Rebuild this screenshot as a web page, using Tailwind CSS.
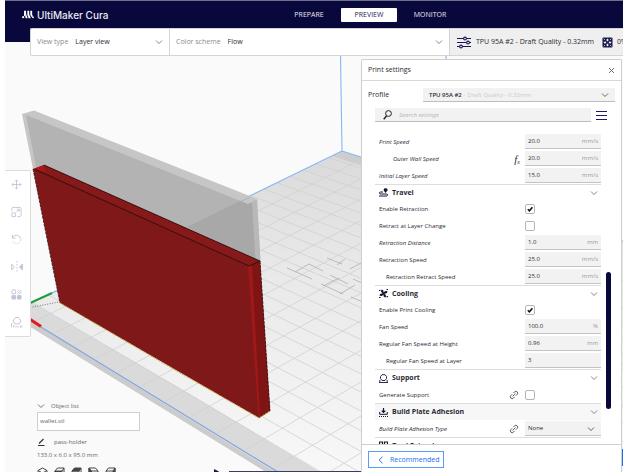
<!DOCTYPE html>
<html lang="en">
  <head>
    <meta charset="UTF-8" />
    <meta name="viewport" content="width=device-width, initial-scale=1.0" />
    <title>UltiMaker Cura</title>
    <script src="https://cdn.jsdelivr.net/npm/@tailwindcss/browser@4"></script>
  </head>
  <body class="bg-white px-[5px] font-['Open_Sans','Noto_Sans',sans-serif] text-[7px] leading-[10px] text-[#2b2b35]">
    <!-- Shared icons -->
    <svg class="hidden" xmlns="http://www.w3.org/2000/svg">
      <symbol id="chevron" viewBox="0 0 8 8"><path d="M1 2.500l3 3 3-3" fill="none" stroke="currentColor" stroke-width="0.9" /></symbol>
      <symbol id="check" viewBox="0 0 10 10"><path d="M2.800 5.200l1.600 1.600 3-3.600" fill="none" stroke="#101024" stroke-width="1.600" /></symbol>
      <symbol id="link" viewBox="0 0 10 10">
        <g fill="none" stroke="#555" stroke-width="0.9" transform="rotate(-45 5 5)">
          <path d="M4.200 3.200H2.400a1.800 1.800 0 000 3.600h1.800" />
          <path d="M5.800 3.200h1.800a1.800 1.800 0 010 3.600H5.800" />
          <path d="M3 5h4" />
        </g>
      </symbol>
    </svg>

    <div class="relative h-screen overflow-hidden bg-[#fafafa]">
      <!-- 3D view -->
      <svg class="absolute inset-0 h-full w-full" viewBox="5 0 618 472" preserveAspectRatio="xMinYMin slice" xmlns="http://www.w3.org/2000/svg">
        <defs>
          <linearGradient id="bed" x1="0" y1="0" x2="0" y2="1">
            <stop offset="0" stop-color="#dadada" />
            <stop offset="0.35" stop-color="#e8e8e8" />
            <stop offset="1" stop-color="#f8f8f8" />
          </linearGradient>
          <clipPath id="bed-clip"><path d="M342 151L623 241V472H266L16 318V310z" /></clipPath>
        </defs>
        <g clip-path="url(#bed-clip)">
          <rect x="5" y="151" width="618" height="321" fill="url(#bed)" />
          <path d="M16 293l164 95 140 84h-60L16 322z" fill="#dadada" />
          <path d="M342 151l-10 5 40 13v-10z" fill="#cdcdcd" />
          <path id="grid" d="" fill="none" stroke="#d0d0d0" stroke-width="0.8" />
          <path d="M16 312L278 474 264 474 16 320z" fill="#cccccc" />
          <path d="M287 268l25 11M295 272l14-8 14 7M323 286l16-8M321 284l22 10M340 294l15-9M351 297l12 5M327 258l15 6M337 265l8-6M330 275l18 9M350 269l11-6M353 279l9 4" fill="none" stroke="#b4b4b4" stroke-width="0.9" />
        </g>
        <path d="M340.500 55L342 151L188 226M342 151l281 90M446 55v6" fill="none" stroke="#86b5f6" stroke-width="1.100" />
        <path d="M41 327L278 472M52 293l6-3" fill="none" stroke="#7ba3e4" stroke-width="1.100" />
        <path d="M28 304l24-11" stroke="#1f9d3d" stroke-width="2" />
        <path d="M28 318l13 8.500" stroke="#e01b24" stroke-width="3.200" />
        <path d="M30 307.500l29-5.500" stroke="#555" stroke-width="0.8" stroke-dasharray="1 1.500" />

        <!-- layers not printed yet -->
        <path d="M22 114l12-3.500L257 199l3.500 63L44 166l-11 3z" fill="#c6c6c6" />
        <path d="M26 115L248 204l7-3 4 61L44 166l-8 1z" fill="#b3b3b3" />
        <path d="M187 227l53-26 8 3 7-3 3.500 60z" fill="#a8a8a8" />
        <path d="M252 202l5-3 3.500 63-5-2z" fill="#b8b8b8" />
        <path d="M236 204L250 197" stroke="#9aa9bd" stroke-width="0.7" />

        <!-- printed layers -->
        <path d="M33 169l11-4 216 96 10 150-11 7L60 303z" fill="#7f1919" />
        <path d="M33 169l11-4 2 7z" fill="#a81616" />
        <path d="M44 165l216 96-11 5L45 172.500z" fill="#861a1a" />
        <path d="M249 266l11-5 10 150-11 7z" fill="#7f1414" />
        <path d="M248 266l4-1 8 152-1.500.5z" fill="#a01919" />
        <path d="M44 165l216 96M35 169.500l214 96.500 11-5" fill="none" stroke="#2c0a0a" stroke-width="0.8" />
        <path d="M33 169l27 134M260 261l10 150" fill="none" stroke="#3a1212" stroke-width="0.8" stroke-dasharray="3 1" />
        <path d="M60 303l120 70 79 45 11-7" fill="none" stroke="#c9b44a" stroke-width="1" stroke-dasharray="2 1" />

        <!-- simulation slider -->
        <path d="M214 469l5 2.500-5 3z" fill="#1a1a52" />
        <path d="M229 471.500h140" stroke="#3a3a6c" />
        <path d="M622 449h1v17h-1z" fill="#196ef0" />
      </svg>

      <!-- Header -->
      <header class="relative flex h-[42px] items-start border-t border-[#70708e] bg-[#08083c] text-[#e8e8f0]">
        <div class="flex h-[27px] w-[276px] items-center gap-[3px] pl-[17px]">
          <svg class="h-[9px] w-[12px] shrink-0" viewBox="0 0 13 9" fill="#fff" xmlns="http://www.w3.org/2000/svg">
            <path d="M2.200 0.500h2.200v4.500L2.200 6.500zM5.800 0.500h2v4l1.800 4H7.200L5.800 5z M9 0.500h2v4l1 2.500h-2L9 5z" />
            <path d="M4.400 4l1.700 4.500H4.100L3.300 6z" />
            <circle cx="1.300" cy="7.400" r="1.200" />
            <circle cx="11.900" cy="7.600" r="1" />
          </svg>
          <h1 class="font-[Inter,sans-serif] text-[10px] font-medium whitespace-nowrap">UltiMaker Cura</h1>
        </div>
        <nav class="flex h-[27px] items-center gap-1">
          <button class="h-[14px] w-[56px] rounded-[1px]">PREPARE</button>
          <button class="h-[14px] w-[56px] rounded-[1px] bg-white text-[#1a1a52]">PREVIEW</button>
          <button class="h-[14px] w-[58px] rounded-[1px]">MONITOR</button>
        </nav>
      </header>

      <!-- View options -->
      <div class="relative -mt-[14px] ml-[25px] flex h-7 rounded-l-[2px] border border-r-0 border-[#d4d4d4] bg-white">
        <div class="relative flex w-[139px] items-center gap-[7px] border-r border-[#d4d4d4] pr-2 pl-[6px]">
          <label for="view-type" class="whitespace-nowrap text-[#8c8c8c]">View type</label>
          <select id="view-type" class="flex-1 appearance-none">
            <option>Layer view</option>
          </select>
          <svg class="pointer-events-none absolute right-[6px] h-2 w-2 text-[#777]"><use href="#chevron" /></svg>
        </div>
        <div class="relative flex flex-1 items-center gap-[7px] border-r border-[#d4d4d4] pr-2 pl-[6px]">
          <label for="color-scheme" class="whitespace-nowrap text-[#8c8c8c]">Color scheme</label>
          <select id="color-scheme" class="flex-1 appearance-none">
            <option>Flow</option>
          </select>
          <svg class="pointer-events-none absolute right-[6px] h-2 w-2 text-[#777]"><use href="#chevron" /></svg>
        </div>
        <button class="flex w-[173px] items-center overflow-hidden bg-[#efefef] pl-[7px] whitespace-nowrap">
          <svg class="mr-[5px] h-[13px] w-[14px] shrink-0" viewBox="0 0 14 13" fill="none" stroke="#1a1a52" stroke-width="1.100" xmlns="http://www.w3.org/2000/svg">
            <path d="M0 2.500h6.500M9.500 2.500H14M0 6.500h9.500M12.500 6.500H14M0 10.500h2.500M5.500 10.500H14" />
            <circle cx="8" cy="2.500" r="1.400" />
            <circle cx="11" cy="6.500" r="1.400" />
            <circle cx="4" cy="10.500" r="1.400" />
          </svg>
          <span>TPU 95A #2 - Draft Quality - 0.32mm</span>
          <svg class="mr-1 ml-2 h-[11px] w-[11px] shrink-0" viewBox="0 0 11 11" xmlns="http://www.w3.org/2000/svg">
            <rect x="0.500" y="0.500" width="10" height="10" rx="1" fill="#1a1a52" />
            <path d="M5.500 1.500l1.300 1.500-1.300 1.500-1.300-1.500zM5.500 6.500l1.300 1.500-1.300 1.500-1.300-1.500zM1.500 5.500l1.500-1.300 1.500 1.300-1.500 1.300zM6.500 5.500l1.500-1.300 1.500 1.300-1.500 1.300z" fill="#efefef" />
            <path d="M1.800 1.800l1 1M9.200 1.800l-1 1M1.800 9.200l1-1M9.200 9.200l-1-1" stroke="#efefef" stroke-width="0.9" />
          </svg>
          <span>0%</span>
        </button>
      </div>

      <!-- Tools -->
      <div class="absolute top-[170px] left-0 flex w-[26px] flex-col items-center gap-4 rounded-r-[2px] border border-l-0 border-[#dcdcdc] bg-white py-2 pr-[2px] text-[#c4c4d6]">
        <button aria-label="Move">
          <svg class="h-[11px] w-[11px]" viewBox="0 0 12 12" fill="none" stroke="currentColor" xmlns="http://www.w3.org/2000/svg">
            <path d="M6 1v10M1 6h10M4.300 2.700L6 1l1.700 1.700M4.300 9.300L6 11l1.700-1.700M2.700 4.300L1 6l1.700 1.700M9.300 4.300L11 6 9.300 7.700" />
          </svg>
        </button>
        <button aria-label="Scale">
          <svg class="h-[12px] w-[11px]" viewBox="0 0 12 12" fill="none" stroke="currentColor" xmlns="http://www.w3.org/2000/svg">
            <path d="M1 5V1.800L1.800 1H10l1 .8V10l-1 1H7M1 7h4v4H1zM6 6l3-3M6.300 3H9v2.700" />
          </svg>
        </button>
        <button aria-label="Rotate">
          <svg class="h-[11px] w-[11px]" viewBox="0 0 12 12" fill="none" stroke="currentColor" xmlns="http://www.w3.org/2000/svg">
            <path d="M1.500 1v3.500H5M1.700 4.300A4.600 4.600 0 0110.600 6" />
            <path d="M10.600 6.500A4.600 4.600 0 012 8" stroke-dasharray="1.300 1.200" />
          </svg>
        </button>
        <button aria-label="Mirror">
          <svg class="h-[12px] w-[12px]" viewBox="0 0 12 12" fill="currentColor" stroke="currentColor" xmlns="http://www.w3.org/2000/svg">
            <path d="M11.500 3v6L8.500 6z" />
            <path d="M.7 3.200v5.600L3.500 6z" fill="none" />
            <path d="M6 0v12" stroke-dasharray="1.500 1.500" />
          </svg>
        </button>
        <button aria-label="Per model settings">
          <svg class="h-[11px] w-[11px]" viewBox="0 0 12 12" fill="none" stroke="currentColor" xmlns="http://www.w3.org/2000/svg">
            <rect x="1" y="1" width="4" height="4" rx="0.500" />
            <path d="M7 3l2-2M7 5.500L11.500 1M9 5.500l2.500-2.500" />
            <rect x="1" y="7" width="4" height="4" rx="0.500" fill="currentColor" />
            <rect x="7" y="7" width="4" height="4" rx="0.500" fill="currentColor" />
          </svg>
        </button>
        <button aria-label="Support blocker">
          <svg class="h-[12px] w-[12px]" viewBox="0 0 12 12" fill="none" stroke="currentColor" xmlns="http://www.w3.org/2000/svg">
            <path d="M4 8L2 5l2.500-3.500h3L10 5 8 8zM.7 7v4.500M2.800 9v2.500M5 10v1.500M7 10v1.500M9 9.500l2.300 2M11.300 9.500L9 11.500" />
          </svg>
        </button>
      </div>

      <!-- Object list -->
      <div class="absolute bottom-[-7px] left-8 flex w-[103px] flex-col text-[6px] text-[#666]">
        <button class="flex items-center gap-[6px] pb-[1px] text-left">
          <svg class="h-2 w-2"><use href="#chevron" /></svg>
          Object list
        </button>
        <ul class="border border-[#cfcfcf] bg-white">
          <li class="px-[2px] py-1 leading-[9px]">wallet.stl</li>
        </ul>
        <div class="flex items-center gap-[9px] pt-[6px]">
          <svg class="h-2 w-2" viewBox="0 0 8 8" fill="none" stroke="#333" xmlns="http://www.w3.org/2000/svg">
            <path d="M2 5.500L6.500 1M1 7.500h6.500" stroke-width="1.200" />
          </svg>
          <span>pass-holder</span>
        </div>
        <p class="pt-[3px]">133.0 x 6.0 x 95.0 mm</p>
        <div class="flex gap-[6px] pt-[7px] text-[#444]">
          <button aria-label="3D view">
            <svg class="h-[12px] w-[11px]" viewBox="0 0 11 12" fill="none" stroke="currentColor" xmlns="http://www.w3.org/2000/svg"><path d="M1 3.500L5.500 1 10 3.500v5L5.500 11 1 8.500zM1 3.500L5.500 6 10 3.500M5.500 6v5" /></svg>
          </button>
          <button aria-label="Front view">
            <svg class="h-[12px] w-[11px]" viewBox="0 0 11 12" fill="none" stroke="currentColor" xmlns="http://www.w3.org/2000/svg"><path d="M1 4l2.500-3H10v6l-2 3H1zM8 4l2-3" /><path d="M1 4h7v6H1z" fill="currentColor" /></svg>
          </button>
          <button aria-label="Top view">
            <svg class="h-[12px] w-[11px]" viewBox="0 0 11 12" fill="none" stroke="currentColor" xmlns="http://www.w3.org/2000/svg"><path d="M1 4h7v6H1zM10 1v6l-2 3" /><path d="M1 4l2.500-3H10L8 4z" fill="currentColor" /></svg>
          </button>
          <button aria-label="Left view">
            <svg class="h-[12px] w-[11px]" viewBox="0 0 11 12" fill="none" stroke="currentColor" xmlns="http://www.w3.org/2000/svg"><path d="M1 1h6.500L10 4v6H3.500L1 7zM3.500 4H10" /><path d="M1 1l2.500 3v6L1 7z" fill="currentColor" /></svg>
          </button>
          <button aria-label="Right view">
            <svg class="h-[12px] w-[11px]" viewBox="0 0 11 12" fill="none" stroke="currentColor" xmlns="http://www.w3.org/2000/svg"><path d="M1 4l2.500-3H10v6l-2 3H1zM1 4h7" /><path d="M8 4l2-3v6l-2 3z" fill="currentColor" /></svg>
          </button>
        </div>
      </div>

      <!-- Print settings -->
      <section class="absolute top-[59px] right-[1px] bottom-0 flex w-[261px] flex-col rounded-t-[2px] border border-b-0 border-[#cfcfcf] bg-white">
        <div class="flex h-[21px] items-center justify-between border-b border-[#d8d8d8] px-[6px]">
          <h2>Print settings</h2>
          <button aria-label="Close">
            <svg class="h-[7px] w-[7px]" viewBox="0 0 7 7" stroke="#666" stroke-width="0.9" xmlns="http://www.w3.org/2000/svg"><path d="M1 1l5 5M6 1L1 6" /></svg>
          </button>
        </div>
        <div class="flex items-center px-[6px] pt-[7px]">
          <span class="w-[55px]">Profile</span>
          <button class="flex h-[14px] flex-1 items-center border-b border-[#bdbdbd] bg-[#f2f2f2] px-[6px] text-left text-[6px]">
            <span class="font-semibold">TPU 95A #2</span>
            <span class="flex-1 pl-[2px] text-[#cbcbcb]">- Draft Quality - 0.32mm</span>
            <svg class="h-2 w-2 text-[#555]"><use href="#chevron" /></svg>
          </button>
        </div>
        <div class="flex items-center gap-[5px] pt-[6px] pr-[14px] pl-[13px]">
          <label class="flex h-[14px] flex-1 items-center gap-[7px] border-b border-[#bdbdbd] bg-[#f2f2f2] pl-2">
            <svg class="h-[10px] w-[9px] shrink-0" viewBox="0 0 9 10" fill="none" stroke="#222" xmlns="http://www.w3.org/2000/svg">
              <circle cx="5.500" cy="3.500" r="2.900" />
              <path d="M3.500 6L.7 9.300" stroke-width="1.400" />
            </svg>
            <input type="text" aria-label="Search settings" placeholder="Search settings" class="w-full text-[6px] italic outline-none placeholder:text-[#b4b4b4]" />
          </label>
          <button aria-label="Settings visibility" class="flex w-[11px] flex-col gap-[3px]">
            <span class="h-[1px] w-full bg-[#1a1a62]"></span>
            <span class="h-[1px] w-full bg-[#1a1a62]"></span>
            <span class="h-[1px] w-full bg-[#1a1a62]"></span>
          </button>
        </div>

        <div class="relative mt-[11px] min-h-0 flex-1 overflow-hidden pr-5 pl-[13px] text-[6px]">
          <div class="flex h-[17px] items-center pl-1">
            <label for="print-speed" class="flex-1 italic">Print Speed</label>
            <div class="flex h-[15px] w-[76px] items-center border-b border-[#c4c4c4] bg-[#f2f2f2] px-[3px]">
              <input id="print-speed" type="text" value="20.0" class="w-0 flex-1 outline-none" />
              <span class="text-[#9a9a9a]">mm/s</span>
            </div>
          </div>
          <div class="flex h-[17px] items-center pl-[18px]">
            <label for="outer-wall-speed" class="flex-1 italic">Outer Wall Speed</label>
            <button aria-label="Reset to calculated value" class="mr-[5px] font-['Liberation_Serif',serif] text-[11px] text-[#333] italic">f<sub class="text-[6px]">x</sub></button>
            <div class="flex h-[15px] w-[76px] items-center border-b border-[#c4c4c4] bg-[#f2f2f2] px-[3px]">
              <input id="outer-wall-speed" type="text" value="20.0" class="w-0 flex-1 outline-none" />
              <span class="text-[#9a9a9a]">mm/s</span>
            </div>
          </div>
          <div class="flex h-[17px] items-center pl-1">
            <label for="initial-layer-speed" class="flex-1 italic">Initial Layer Speed</label>
            <div class="flex h-[15px] w-[76px] items-center border-b border-[#c4c4c4] bg-[#f2f2f2] px-[3px]">
              <input id="initial-layer-speed" type="text" value="15.0" class="w-0 flex-1 outline-none" />
              <span class="text-[#9a9a9a]">mm/s</span>
            </div>
          </div>

          <button class="flex h-4 w-full items-center gap-1 border-t border-[#dedede] pr-[3px] pl-1 text-left text-[7px] font-bold">
            <svg class="h-[9px] w-[9px]" viewBox="0 0 9 9" fill="none" stroke="#151530" xmlns="http://www.w3.org/2000/svg">
              <path d="M0 8h7.500a1 1 0 000-2H1.500a1 1 0 010-2H4" />
              <path d="M6.500 5L4.800 2.500V1l1-.8h1.600l1 .8v1.500z" fill="#151530" stroke="none" />
            </svg>
            <span class="flex-1">Travel</span>
            <svg class="h-2 w-2 text-[#777]"><use href="#chevron" /></svg>
          </button>
          <div class="flex h-[17px] items-center pl-1">
            <label for="enable-retraction" class="flex-1">Enable Retraction</label>
            <div class="relative flex w-[76px]">
              <input id="enable-retraction" type="checkbox" checked class="h-[10px] w-[10px] appearance-none rounded-[2px] border border-[#b5b5b5] bg-white" />
              <svg class="pointer-events-none absolute top-0 left-0 h-[10px] w-[10px]"><use href="#check" /></svg>
            </div>
          </div>
          <div class="flex h-[17px] items-center pl-1">
            <label for="retract-layer-change" class="flex-1">Retract at Layer Change</label>
            <div class="flex w-[76px]">
              <input id="retract-layer-change" type="checkbox" class="h-[10px] w-[10px] appearance-none rounded-[2px] border border-[#b5b5b5] bg-white" />
            </div>
          </div>
          <div class="flex h-[17px] items-center pl-1">
            <label for="retraction-distance" class="flex-1 italic">Retraction Distance</label>
            <div class="flex h-[15px] w-[76px] items-center border-b border-[#c4c4c4] bg-[#f2f2f2] px-[3px]">
              <input id="retraction-distance" type="text" value="1.0" class="w-0 flex-1 outline-none" />
              <span class="text-[#9a9a9a]">mm</span>
            </div>
          </div>
          <div class="flex h-[17px] items-center pl-1">
            <label for="retraction-speed" class="flex-1">Retraction Speed</label>
            <div class="flex h-[15px] w-[76px] items-center border-b border-[#c4c4c4] bg-[#f2f2f2] px-[3px]">
              <input id="retraction-speed" type="text" value="25.0" class="w-0 flex-1 outline-none" />
              <span class="text-[#9a9a9a]">mm/s</span>
            </div>
          </div>
          <div class="flex h-[17px] items-center pl-[11px]">
            <label for="retract-speed" class="flex-1">Retraction Retract Speed</label>
            <div class="flex h-[15px] w-[76px] items-center border-b border-[#c4c4c4] bg-[#f2f2f2] px-[3px]">
              <input id="retract-speed" type="text" value="25.0" class="w-0 flex-1 outline-none" />
              <span class="text-[#9a9a9a]">mm/s</span>
            </div>
          </div>

          <button class="flex h-4 w-full items-center gap-1 border-t border-[#dedede] pr-[3px] pl-1 text-left text-[7px] font-bold">
            <svg class="h-[9px] w-[9px]" viewBox="0 0 9 9" fill="#151530" xmlns="http://www.w3.org/2000/svg">
              <path d="M4.300 4.300C2 4 1.500 2 2.500.5c2 .2 2.500 2 1.800 3.800zM4.700 4.300C5 2 7 1.500 8.500 2.500c-.2 2-2 2.500-3.800 1.800zM4.700 4.700C7 5 7.500 7 6.500 8.500c-2-.2-2.500-2-1.800-3.800zM4.300 4.700C4 7 2 7.500.5 6.500c.2-2 2-2.500 3.800-1.800z" />
              <circle cx="4.500" cy="4.500" r="1.200" />
              <path d="M0 1h1.500v1H0zM7.500 0H9v1H7.500zM7.500 7H9v1.200H7.500zM0 8h1.500v1H0z" />
            </svg>
            <span class="flex-1">Cooling</span>
            <svg class="h-2 w-2 text-[#777]"><use href="#chevron" /></svg>
          </button>
          <div class="flex h-[17px] items-center pl-1">
            <label for="enable-cooling" class="flex-1">Enable Print Cooling</label>
            <div class="relative flex w-[76px]">
              <input id="enable-cooling" type="checkbox" checked class="h-[10px] w-[10px] appearance-none rounded-[2px] border border-[#b5b5b5] bg-white" />
              <svg class="pointer-events-none absolute top-0 left-0 h-[10px] w-[10px]"><use href="#check" /></svg>
            </div>
          </div>
          <div class="flex h-[17px] items-center pl-1">
            <label for="fan-speed" class="flex-1">Fan Speed</label>
            <div class="flex h-[15px] w-[76px] items-center border-b border-[#c4c4c4] bg-[#f2f2f2] px-[3px]">
              <input id="fan-speed" type="text" value="100.0" class="w-0 flex-1 outline-none" />
              <span class="text-[#9a9a9a]">%</span>
            </div>
          </div>
          <div class="flex h-[17px] items-center pl-1">
            <label for="fan-height" class="flex-1">Regular Fan Speed at Height</label>
            <div class="flex h-[15px] w-[76px] items-center border-b border-[#c4c4c4] bg-[#f2f2f2] px-[3px]">
              <input id="fan-height" type="text" value="0.96" class="w-0 flex-1 outline-none" />
              <span class="text-[#9a9a9a]">mm</span>
            </div>
          </div>
          <div class="flex h-[17px] items-center pl-[11px]">
            <label for="fan-layer" class="flex-1">Regular Fan Speed at Layer</label>
            <div class="flex h-[15px] w-[76px] items-center border-b border-[#c4c4c4] bg-[#f2f2f2] px-[3px]">
              <input id="fan-layer" type="text" value="3" class="w-0 flex-1 outline-none" />
            </div>
          </div>

          <button class="flex h-[17px] w-full items-center gap-1 border-t border-[#dedede] pr-[3px] pl-1 text-left text-[7px] font-bold">
            <svg class="h-[9px] w-[9px]" viewBox="0 0 9 9" fill="none" stroke="#151530" xmlns="http://www.w3.org/2000/svg">
              <path d="M3 6.500L1.500 4.500V2.500L3 .7h3l1.500 1.800v2L6 6.500zM0 8.500h9M.8 6v2M8.200 6v2" stroke-width="0.9" />
            </svg>
            <span class="flex-1">Support</span>
            <svg class="h-2 w-2 text-[#777]"><use href="#chevron" /></svg>
          </button>
          <div class="flex h-[17px] items-center pl-1">
            <label for="generate-support" class="flex-1">Generate Support</label>
            <svg class="mr-[6px] h-[10px] w-[10px]"><use href="#link" /></svg>
            <div class="flex w-[76px]">
              <input id="generate-support" type="checkbox" class="h-[10px] w-[10px] appearance-none rounded-[2px] border border-[#b5b5b5] bg-white" />
            </div>
          </div>

          <button class="flex h-[17px] w-full items-center gap-1 border-t border-[#dedede] bg-[#f7f7f7] pr-[3px] pl-1 text-left text-[7px] font-bold">
            <svg class="h-[9px] w-[9px]" viewBox="0 0 9 9" fill="none" stroke="#151530" xmlns="http://www.w3.org/2000/svg">
              <path d="M4.500 0v4M2.700 2.700l1.800 1.800 1.800-1.800" stroke-width="1.200" />
              <path d="M.7 4v2.300h7.600V4" />
              <path d="M0 8.500h9" stroke-dasharray="1 1" />
            </svg>
            <span class="flex-1">Build Plate Adhesion</span>
            <svg class="h-2 w-2 text-[#777]"><use href="#chevron" /></svg>
          </button>
          <div class="flex h-[17px] items-center pl-1">
            <label for="adhesion-type" class="flex-1 italic">Build Plate Adhesion Type</label>
            <svg class="mr-[6px] h-[10px] w-[10px]"><use href="#link" /></svg>
            <div class="relative flex w-[76px] items-center">
              <select id="adhesion-type" class="h-[15px] w-full appearance-none border-b border-[#c4c4c4] bg-[#f2f2f2] px-[3px]">
                <option>None</option>
              </select>
              <svg class="pointer-events-none absolute right-[6px] h-2 w-2 text-[#555]"><use href="#chevron" /></svg>
            </div>
          </div>
          <button class="flex h-4 w-full items-center gap-1 border-t border-[#dedede] pr-[3px] pl-1 text-left text-[7px] font-bold">
            <svg class="h-[9px] w-[9px]" viewBox="0 0 9 9" fill="none" stroke="#151530" xmlns="http://www.w3.org/2000/svg">
              <path d="M.5 1h3v4l-1.500 2L.5 5zM5.500 1h3v4L7 7 5.500 5z" stroke-width="1.200" />
            </svg>
            <span class="flex-1">Dual Extrusion</span>
            <svg class="h-2 w-2 rotate-180 text-[#777]"><use href="#chevron" /></svg>
          </button>

          <!-- scroll handle -->
          <div class="absolute top-[139px] right-[10px] h-[137px] w-[5px] rounded-full bg-[#08083c]"></div>
        </div>

        <div class="border-t border-[#cfcfcf] px-[6px] pt-[6px] pb-[4px]">
          <button class="flex h-[17px] w-[76px] items-center gap-[5px] border border-[#5b9bf5] pl-2 text-[#196ef0]">
            <svg class="h-2 w-2" viewBox="0 0 8 8" fill="none" stroke="currentColor" xmlns="http://www.w3.org/2000/svg"><path d="M5.500 .7L2.200 4l3.300 3.300" /></svg>
            Recommended
          </button>
        </div>
      </section>
    </div>

    <script>
      // Build plate grid: both sets of lines run towards their own vanishing point
      const origin = [16, 310];
      const vanishA = [2736, -1017];
      const vanishB = [-905, -248];

      function project(vanish, w) {
        return origin.map((o, i) => (o + w * vanish[i]) / (1 + w));
      }

      let d = "";
      for (let i = 1; i <= 23; i++) {
        const [x, y] = project(vanishA, i * 0.0059);
        d += `M${x} ${y}L${x + (x - vanishB[0])} ${y + (y - vanishB[1])}`;
      }
      for (let i = 1; i <= 34; i++) {
        const [x, y] = project(vanishB, -i * 0.02);
        d += `M${x} ${y}L${vanishA[0]} ${vanishA[1]}`;
      }
      document.getElementById("grid").setAttribute("d", d);
    </script>
  </body>
</html>
